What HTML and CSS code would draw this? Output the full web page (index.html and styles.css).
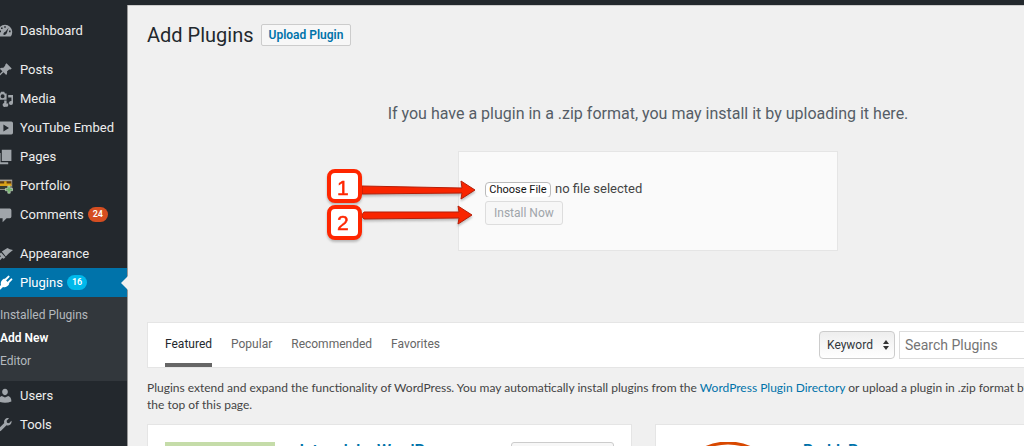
FILE: index.html
```html
<!DOCTYPE html>
<html lang="en">
<head>
<meta charset="utf-8">
<title>Add Plugins</title>
<link rel="stylesheet" href="styles.css">
</head>
<body>
<div class="adminbar"></div>
<div class="shell">
<nav class="menu" aria-label="Main menu">
  <a class="item" href="#"><svg class="icon" viewBox="0 0 20 20"><path fill-rule="evenodd" d="M3 17a9 9 0 1 1 14 0zM9 4h2v2H9zM5 5.500h2v2H5zM3 9.500h2v2H3zM15 9.500h2v2h-2zM8 14c0-2 1.500-2.500 2.500-3l4-5-2 6c-.5 3-4.500 4-4.500 2z"/></svg>Dashboard</a>
  <a class="item spaced" href="#"><svg class="icon" viewBox="0 0 20 20"><path d="m10.400 3 1.500-1.500 6.500 6.500-1.500 1.500c-.9-.3-1.800-.2-2.500.4l-2 2c.6 1.500.3 3-.9 4.200l-3.400-3.400L2.500 18 1 18.500 1.500 17l5.300-5.300-3.400-3.400c1.200-1.200 2.700-1.500 4.200-.9l2-2c.6-.7 1-1.500.8-2.400z"/></svg>Posts</a>
  <a class="item" href="#"><svg class="icon" viewBox="0 0 20 20"><path fill-rule="evenodd" d="M1 3h3l1-2h4l1 2h2v8H1zm6 1a2.500 2.500 0 1 0 0 5 2.500 2.500 0 0 0 0-5z"/><path d="M14 5h6v10a2.500 2.500 0 1 1-2-2.500V8h-4zM9 12h3v5a2.500 2.500 0 1 1-3-2zM14 14v4a2 2 0 1 1-1-2z"/></svg>Media</a>
  <a class="item" href="#"><svg class="icon" viewBox="0 0 20 20"><path fill-rule="evenodd" d="M2 2h16q2 0 2 2v12q0 2-2 2H2q-2 0-2-2V4q0-2 2-2zm6 3.500v9l7-4.500z"/></svg>YouTube Embed</a>
  <a class="item" href="#"><svg class="icon" viewBox="0 0 20 20"><path d="M6 1h12v14H6zM2 5h2.500v11.500H14V19H2z"/></svg>Pages</a>
  <a class="item" href="#"><svg class="icon" viewBox="0 0 20 20"><path fill="#a7a39a" d="M0 2h19v13H0z"/><path fill="#5f3d10" d="M1 4h17v5H1z"/><path fill="#d9a21a" d="M1 7h17v3H1zM9 4h3v4H9z"/><path fill="#363b32" d="M1 10h17v4H1z"/><path fill="#72b26a" stroke="#e0eddc" stroke-width=".7" d="M13.500 10h3v3h3v3h-3v3h-3v-3h-3v-3h3z"/></svg>Portfolio</a>
  <a class="item" href="#"><svg class="icon" viewBox="0 0 20 20"><path d="M4 2h12q2 0 2 2v8q0 2-2 2h-4l-5 5v-5H4q-2 0-2-2V4q0-2 2-2z"/></svg>Comments <span class="badge">24</span></a>
  <a class="item spaced" href="#"><svg class="icon" viewBox="0 0 20 20"><path d="M13 2.500 16 4l4 1-5 4-4 4-5-6zM5 8l5.500 6-2 2-2-1L3 18.500 1 18l.5-3L5 13l-2-3z"/></svg>Appearance</a>
  <a class="item current" href="#"><svg class="icon" viewBox="0 0 20 20"><path d="M9 4.500 15.500 11c-2 3.500-5 5-8 4L4 18.500 1.500 16 5 12.500c-1-3 .5-6 4-8z"/><path d="m10.500 6 4-4M14 9.500l4-4" fill="none" stroke="#fff" stroke-width="2.500" stroke-linecap="round"/></svg>Plugins <span class="badge blue">16</span></a>
  <div class="submenu"><a href="#">Installed Plugins</a><a class="chosen" href="#">Add New</a><a href="#">Editor</a></div>
  <a class="item" href="#"><svg class="icon" viewBox="0 0 20 20"><path d="M10 1c5 0 4.500 8 0 8s-5-8 0-8zM6 10l4 2 4-2q4 1 4 7-8 3-16 0 0-6 4-7z"/></svg>Users</a>
  <a class="item" href="#"><svg class="icon" viewBox="0 0 20 20"><path d="M16.700 9.300c-1.300 1.300-3.200 1.600-4.800 1L5 17.200c-.8.800-2 .8-2.800 0s-.8-2 0-2.800l6.900-6.900c-.6-1.600-.3-3.500 1-4.800S13.300 1 15 1.700L12 4.700l.5 2.500 2.500.5 3-3c.6 1.600 0 3.300-1.300 4.600z"/></svg>Tools</a>
</nav>
<main class="content">
  <header class="heading"><h1>Add Plugins</h1><button class="upload" type="button">Upload Plugin</button></header>
  <section class="uploader">
    <p class="help">If you have a plugin in a .zip format, you may install it by uploading it here.</p>
    <form class="form">
      <label class="file"><input type="file" aria-label="Plugin zip file"><span>no file selected</span></label>
      <button class="install" type="button" disabled>Install Now</button>
      <svg class="callouts" viewBox="0 0 160 90" aria-hidden="true">
        <g class="arrow"><path d="M34 20 134 22 133 15 147 24 133 33 134 27 34 28z"/><path d="M36 46 131 46 130 40 144 49 130 58 131 52 36 53q-4-3 0-7z"/></g>
        <g class="box"><rect x="1" y="5" width="31" height="30" rx="6"/><rect x="1" y="41" width="31" height="31" rx="6"/></g>
        <text x="9" y="29">1</text><text x="9" y="64">2</text>
      </svg>
    </form>
  </section>
  <div class="filter">
    <div class="tabs"><a class="active" href="#">Featured</a><a href="#">Popular</a><a href="#">Recommended</a><a href="#">Favorites</a></div>
    <div class="search">
      <span class="pick"><select aria-label="Search by"><option>Keyword</option></select><svg viewBox="0 0 6 10" aria-hidden="true"><path d="M0 4 3 0l3 4zM0 6h6l-3 4z"/></svg></span>
      <input type="search" placeholder="Search Plugins" aria-label="Search Plugins">
    </div>
  </div>
  <p class="intro">Plugins extend and expand the functionality of WordPress. You may automatically install plugins from the <a href="#">WordPress Plugin Directory</a> or upload a plugin in .zip format by the top of this page.</p>
  <div class="cards">
    <article class="card"><div class="thumb"></div><h2>Jetpack by WordPress</h2><button type="button" aria-label="Install"></button></article>
    <article class="card"><svg class="logo" viewBox="0 0 110 110"><circle cx="55" cy="55" r="54"/></svg><h2>BuddyPress</h2></article>
  </div>
</main>
</div>
</body>
</html>
```
FILE: styles.css
```css
* { box-sizing: border-box; }
body { margin: 0; height: 100vh; overflow: hidden; display: flex; flex-direction: column; background: #f0f0f0; color: #444; font: 12px/17px Roboto, "Liberation Sans", sans-serif; }
button, input, select { font: inherit; margin: 0; }
a { color: #0073aa; text-decoration: none; }
.adminbar { flex: none; height: 5px; background: #23282d; }
.shell { flex: 1; display: flex; min-height: 0; }
.menu { flex: none; width: 128px; padding-top: 11px; background: #23282d; border-right: 1px solid #999; }
.item { position: relative; display: flex; align-items: center; gap: 7px; height: 29px; color: #eee; font-size: 13px; white-space: nowrap; }
.icon { flex: none; width: 16px; height: 16px; margin-left: -3px; fill: #a0a5aa; }
.spaced { margin-top: 10px; }
.badge { margin-left: -3px; padding: 0 5px; border-radius: 8px; background: #d54e21; color: #fff; font-size: 9px; font-weight: 600; line-height: 15px; }
.blue { background: #00b9eb; }
.current { background: #0073aa; color: #fff; }
.current .icon { fill: #fff; }
.current::after { content: ""; position: absolute; right: -1px; border: 7px solid transparent; border-right-color: #f0f0f0; border-left: 0; }
.submenu { display: flex; flex-direction: column; padding: 7px 0 8px; background: #32373c; }
.submenu a { color: #b4b9be; line-height: 23px; }
.submenu .chosen { color: #fff; font-weight: 600; }
.content { flex: 1; min-width: 0; padding-left: 19px; border-top: 1px solid #ccc; }
.heading { display: flex; align-items: center; gap: 7px; padding-top: 16px; }
h1 { margin: 0; color: #23282d; font-size: 20px; font-weight: 400; line-height: 26px; }
.upload { height: 22px; padding: 0 7px; border: 1px solid #ccc; border-radius: 2px; background: #f7f7f7; color: #0073aa; font-weight: 600; line-height: 18px; }
.uploader { display: flex; flex-direction: column; align-items: center; padding: 56px 0 71px; margin-right: -125px; }
.help { margin: 0 0 27px; color: #555d66; font-size: 16px; line-height: 20px; }
.form { position: relative; width: 380px; height: 100px; padding: 28px 26px; border: 1px solid #e5e5e5; background: #fafafa; }
.file { display: flex; align-items: center; gap: 4px; font-size: 13px; }
.file input { width: 66px; height: 17px; overflow: hidden; color: transparent; }
.file input::file-selector-button { width: 66px; height: 16px; margin: 0; padding: 0; border: 1px solid #bbb; border-radius: 4px; background: #fff; color: #111; font: 11px/14px Roboto, sans-serif; }
.install { height: 24px; padding: 0 8px; margin-top: 4px; border: 1px solid #ddd; border-radius: 3px; background: #f7f7f7; color: #a0a5aa; }
.callouts { position: absolute; left: -131px; top: 14px; width: 160px; height: 90px; overflow: visible; filter: drop-shadow(0 2px 1px #8888); }
.arrow { fill: #f92500; stroke: #b51e08; stroke-width: 1; }
.box { fill: #fff; stroke: #ff2600; stroke-width: 4; }
.callouts text { fill: #ff2600; stroke: #ff2600; stroke-width: .5; font: 21px "Liberation Sans", sans-serif; }
.filter { display: flex; align-items: center; justify-content: space-between; height: 46px; padding-left: 17px; background: #fff; border: 1px solid #e5e5e5; border-right: 0; }
.tabs { display: flex; gap: 19px; align-self: stretch; }
.tabs a { padding-top: 13px; color: #666; }
.tabs .active { border-bottom: 4px solid #666; color: #23282d; }
.search { display: flex; gap: 4px; }
.search input { width: 125px; height: 28px; padding: 0 5px; border: 1px solid #ddd; border-right: 0; outline: 0; font-size: 14px; }
.search input::placeholder { color: #757575; }
.pick { position: relative; }
.pick select { width: 76px; height: 28px; padding: 0 7px; appearance: none; border: 1px solid #ccc; border-radius: 4px; background: linear-gradient(#eee, #fff); color: #32373c; }
.pick svg { position: absolute; right: 6px; top: 9px; width: 6px; height: 10px; fill: #333; }
.intro { margin: 11px -12px 11px 0; font-family: Lato, sans-serif; }
.cards { display: grid; grid-template-columns: 1fr 1fr; gap: 23px; margin-right: -116px; }
.card { display: flex; gap: 20px; height: 150px; padding: 17px; background: #fff; border: 1px solid #e5e5e5; }
.thumb { flex: none; width: 110px; height: 110px; background: #c5dca9; }
.card h2 { flex: 1; margin: 0; color: #0073aa; font-size: 16px; font-weight: 600; line-height: 18px; white-space: nowrap; }
.card button { width: 103px; height: 24px; border: 1px solid #ccc; border-radius: 3px; background: #f7f7f7; }
.logo { flex: none; width: 110px; height: 110px; fill: none; stroke: #d84800; stroke-width: 3; }
```
